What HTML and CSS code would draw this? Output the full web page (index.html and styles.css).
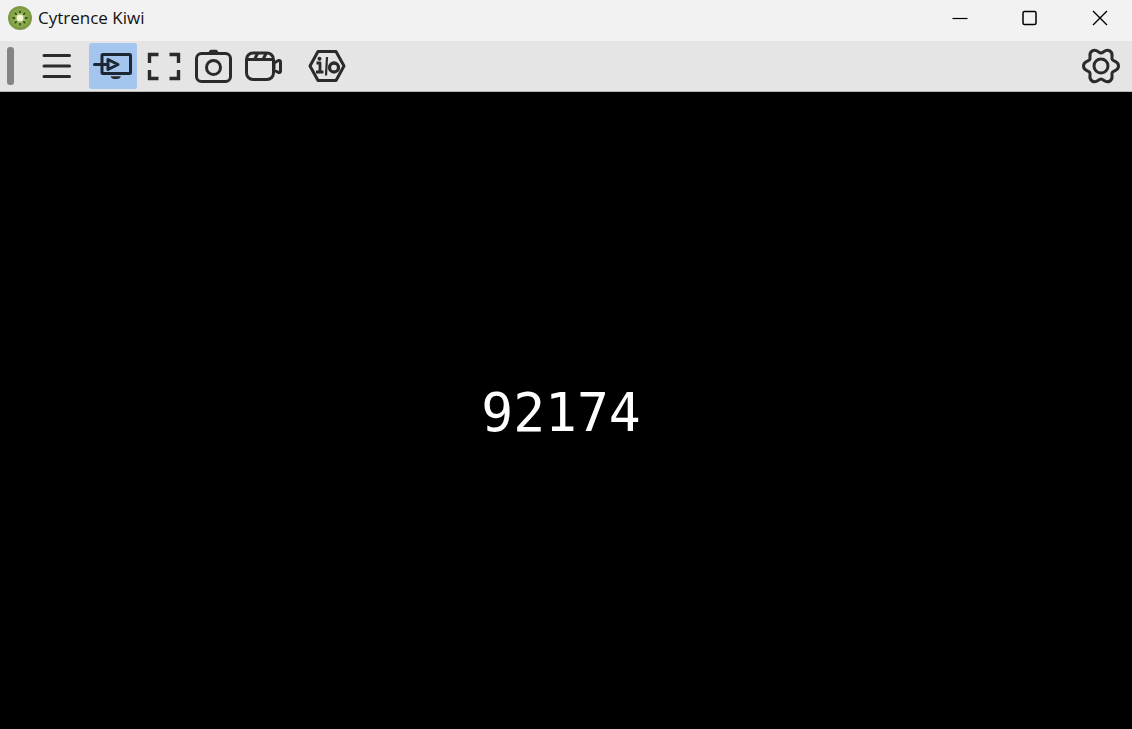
FILE: index.html
```html
<!DOCTYPE html>
<html lang="en">
<head>
<meta charset="utf-8">
<title>Cytrence Kiwi</title>
<link rel="stylesheet" href="styles.css">
</head>
<body>
<div class="window">
  <header class="titlebar">
    <svg class="logo" viewBox="0 0 24 24" aria-hidden="true">
      <circle cx="12" cy="12" r="12" fill="#7f9a45"/>
      <circle cx="12" cy="12" r="9.5" fill="#86a848"/>
      <circle cx="12" cy="12" r="5" fill="#a9c46c"/>
      <circle cx="12" cy="12" r="3.2" fill="#f8f8d8"/>
      <g stroke="#26351a" stroke-width="1.3" stroke-linecap="round">
        <path d="M12 5.2v1.6M12 17.4v1.6M5 12h1.8M17.2 12H19M7.2 7.2l1.2 1.2M15.6 15.6l1.2 1.2M7.2 16.8l1.2-1.2M15.6 8.4l1.2-1.2"/>
      </g>
    </svg>
    <h1 class="title">Cytrence Kiwi</h1>
    <div class="controls">
      <button class="control" type="button" aria-label="Minimize">
        <svg viewBox="0 0 16 16"><path d="M.5 8.5h15" stroke-width="1.2"/></svg>
      </button>
      <button class="control" type="button" aria-label="Maximize">
        <svg viewBox="0 0 16 16"><rect x="1" y="1.5" width="13" height="13" rx="1.5" stroke-width="1.5"/></svg>
      </button>
      <button class="control" type="button" aria-label="Close">
        <svg viewBox="0 0 16 16"><path d="M1 1l14 14M15 1l-14 14" stroke-width="1.4"/></svg>
      </button>
    </div>
  </header>

  <nav class="toolbar" aria-label="Tools">
    <span class="grip"></span>
    <button class="tool tool-menu" type="button" aria-label="Menu">
      <svg viewBox="0 0 48 46"><path d="M11 12.500h25.500M11 23h25.500M11 33.500h25.500" stroke-width="3" stroke-linecap="round"/></svg>
    </button>
    <button class="tool active" type="button" aria-label="Input source" aria-pressed="true">
      <svg viewBox="0 0 48 46">
        <rect x="13" y="11.500" width="28.500" height="19" rx="1"/>
        <path d="M5.500 21.500H19M19 16.500v10l10-5z" stroke-linecap="round"/>
        <path d="M21.500 33.300h10.500q-1 2.700-3 2.700h-4.500q-2 0-3-2.700z" class="solid"/>
      </svg>
    </button>
    <button class="tool" type="button" aria-label="Full screen">
      <svg viewBox="0 0 48 46"><path d="M10.500 20v-8.500h9M30.500 11.500h9V20M39.500 27v8.500h-9M19.500 35.500h-9v-8.500" stroke-width="3.400" stroke-linejoin="miter"/></svg>
    </button>
    <button class="tool" type="button" aria-label="Screenshot">
      <svg viewBox="0 0 48 46">
        <rect x="7.500" y="10.500" width="34" height="28" rx="5"/>
        <circle cx="24.500" cy="24.500" r="7"/>
        <path d="M19.500 10.500q.5-3.700 2.500-3.700h5q2 0 2.500 3.700z" class="solid"/>
      </svg>
    </button>
    <button class="tool" type="button" aria-label="Record">
      <svg viewBox="0 0 48 46">
        <rect x="7.500" y="10" width="27" height="26.500" rx="6.500"/>
        <path d="M7.500 16.500h27M15.500 16.500l3-6M24 16.500l3-6"/>
        <path d="M35 20l4.500-2.500q2-.5 2 1.500v9q0 2-2 1.500L35 27z"/>
      </svg>
    </button>
    <button class="tool tool-io" type="button" aria-label="Input and output">
      <svg viewBox="0 0 48 46">
        <path d="M15 8.500h18L41 23l-8 14.500H15L7 23z"/>
        <path d="M13.500 20h3.500v9M13 29h7.500" stroke-width="2.800"/>
        <circle cx="16.500" cy="15.700" r="2" class="dot"/>
        <path d="M24 14L23 32.500" stroke-width="2.200"/>
        <circle cx="31" cy="24.500" r="4.500" stroke-width="3.300"/>
      </svg>
    </button>
    <button class="tool tool-settings" type="button" aria-label="Settings">
      <svg viewBox="-4 -3 48 46">
        <path d="M20 7C22.500 7 24.420 2.340 28.750 4.840C33.080 7.340 30 11.300 31.260 13.500C32.500 15.700 37.500 15 37.500 20C37.500 25 32.500 24.300 31.260 26.500C30 28.700 33.080 32.660 28.750 35.160C24.420 37.660 22.500 33 20 33C17.500 33 15.580 37.660 11.250 35.160C6.920 32.660 10 28.700 8.740 26.500C7.500 24.300 2.500 25 2.500 20C2.500 15 7.500 15.700 8.740 13.500C10 11.300 6.920 7.340 11.250 4.840C15.580 2.340 17.500 7 20 7z"/>
        <circle cx="20" cy="20" r="7"/>
      </svg>
    </button>
  </nav>

  <main class="screen">
    <p class="code">92174</p>
  </main>
</div>
</body>
</html>
```

FILE: styles.css
```css
* {
  box-sizing: border-box;
}

body {
  margin: 0;
  background: #000;
  font-family: "Open Sans", "Noto Sans", sans-serif;
}

.window {
  display: flex;
  flex-direction: column;
  min-height: 100vh;
}

.titlebar {
  display: flex;
  align-items: center;
  height: 41px;
  padding: 0 0 5px 8px;
  background: #f2f2f2;
}

.logo {
  width: 24px;
  height: 24px;
  margin-right: 6px;
}

.title {
  margin: 0;
  color: #111;
  font-size: 17px;
  font-weight: 400;
  line-height: 24px;
}

.controls {
  display: flex;
  gap: 6px;
  margin-left: auto;
}

.control {
  display: flex;
  align-items: center;
  justify-content: center;
  width: 64px;
  height: 36px;
  padding: 0;
  border: 0;
  background: none;
}

.control svg {
  width: 16px;
  height: 16px;
  fill: none;
  stroke: #000;
}

.toolbar {
  display: flex;
  align-items: center;
  gap: 2px;
  height: 51px;
  padding: 0 7px;
  border-bottom: 1px solid #b8b8b8;
  background: #e5e5e5;
}

.grip {
  width: 7px;
  height: 38px;
  border-radius: 3px;
  background: #848484;
}

.tool {
  width: 48px;
  height: 46px;
  padding: 0;
  border: 0;
  border-radius: 3px;
  background: none;
}

.tool svg {
  display: block;
  width: 48px;
  height: 46px;
  fill: none;
  stroke: #2b2b2b;
  stroke-width: 3;
  stroke-linejoin: round;
}

.tool .solid,
.tool .dot {
  fill: #2b2b2b;
  stroke: none;
}

.tool-menu {
  margin: 0 6px 0 17px;
}

.active {
  background: #a3c5ee;
}

.active svg {
  stroke: #1c2733;
}

.tool-io {
  margin-left: 14px;
}

.tool-settings {
  margin-left: auto;
}

.screen {
  display: flex;
  flex: 1;
  align-items: center;
  justify-content: center;
  padding: 4px 10px 0 0;
  background: #000;
}

.code {
  margin: 0;
  color: #fff;
  font-family: "DejaVu Sans Mono", monospace;
  font-size: 53px;
  line-height: 64px;
}
```
